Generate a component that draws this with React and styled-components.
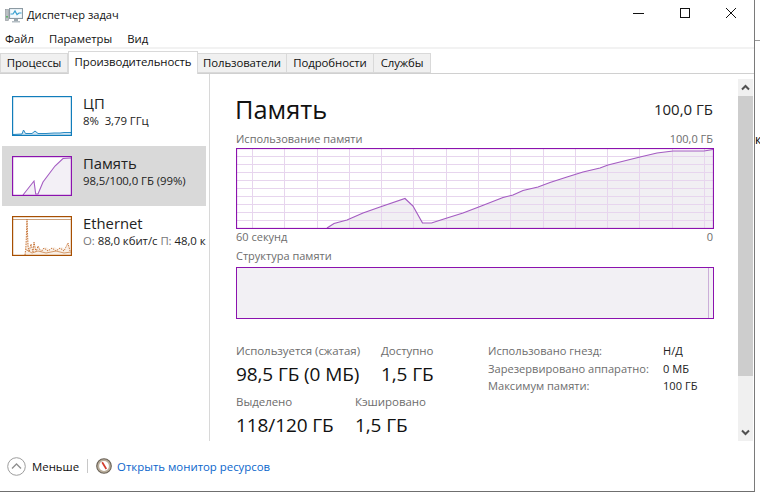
import React from "react";
import styled, { createGlobalStyle } from "styled-components";

const Global = createGlobalStyle`
  html, body { margin: 0; padding: 0; background: #fff; }
  body { width: 760px; height: 494px; overflow: hidden; font-family: "Open Sans", "Noto Sans", sans-serif; }
  * { box-sizing: border-box; }
`;

const Desktop = styled.div`display: flex; width: 760px; height: 494px; background: #fff;`;
const Win = styled.div`
  width: 755px; height: 492px; flex: none; display: flex; flex-direction: column;
  border-right: 1px solid #7a7a7a; border-bottom: 1px solid #6f6f6f; background: #fff;
`;
const Sliver = styled.div`
  flex: 1; display: flex; flex-direction: column; padding-top: 40px;
  font: 12px "Open Sans", sans-serif; color: #000; overflow: hidden;
`;
const Tick = styled.div`height: 1px; background: #9a9a9a;`;
const SliverChar = styled.div`margin-top: 91px; line-height: 16px;`;

const TitleBar = styled.div`height: 29px; display: flex; align-items: center; padding-left: 5px; flex: none;`;
const TitleText = styled.div`margin-left: 4px; font-size: 11.1px; color: #111;`;
const WinButtons = styled.div`margin-left: auto; display: flex; align-self: flex-start;`;
const WinBtn = styled.div`width: 46px; height: 26px; display: flex; align-items: center; justify-content: center;`;

const MenuBar = styled.div`display: flex; height: 20px; flex: none; align-items: center; padding: 0 0 0 5px; gap: 15px; font-size: 11.3px; color: #111; border-bottom: 2px solid #f2f2f2;`;

const TabStrip = styled.div`display: flex; height: 25px; flex: none; align-items: flex-end; border-bottom: 1px solid #d0d0d0; padding-left: 1px;`;
const Tab = styled.div`
  width: ${p => p.$w}px;
  height: ${p => (p.$active ? "23px" : "20px")};
  margin-bottom: ${p => (p.$active ? "-1px" : "0")};
  padding-bottom: ${p => (p.$active ? "3px" : "1px")};
  display: flex; align-items: center; justify-content: center; font-size: 11.4px; color: #111; letter-spacing: -.1px; white-space: nowrap;
  background: ${p => (p.$active ? "#fff" : "#f0f0f0")};
  border: 1px solid #d9d9d9; border-bottom: ${p => (p.$active ? "none" : "1px solid #d9d9d9")};
  margin-left: ${p => (p.$active ? "0" : "-1px")};
`;

const Body = styled.div`flex: 1; display: flex; min-height: 0;`;
const Sidebar = styled.div`width: 210px; flex: none; padding: 22px 3px 0 2px; border-right: 1px solid #d8d8d8; display: flex; flex-direction: column; overflow: hidden;`;
const SideItem = styled.div`
  height: ${p => (p.$first ? "50px" : "60px")}; width: 204px; flex: none; display: flex;
  padding: ${p => (p.$first ? "0 0 0 10px" : "10px 0 0 10px")};
  background: ${p => (p.$active ? "#d9d9d9" : "transparent")};
  white-space: nowrap;
`;
const Thumb = styled.svg`width: 60px; height: 40px; flex: none; display: block; background: #fff;`;
const SideText = styled.div`margin-left: 11px; display: flex; flex-direction: column; margin-top: -3px;`;
const SideName = styled.div`font-size: 14.8px; line-height: 20px; color: #222;`;
const SideSub = styled.div`font-size: 11.4px; line-height: 16px; color: #222; letter-spacing: -.05px;`;
const Dim = styled.span`color: #777;`;

const Main = styled.div`width: 528px; flex: none; padding: 17px 25px 0 26px; display: flex; flex-direction: column;`;
const HeadRow = styled.div`display: flex; justify-content: space-between; align-items: center; height: 36px; margin-bottom: 4px;`;
const HeadTitle = styled.div`font-size: 25.4px; color: #111; margin-left: -1px;`;
const HeadValue = styled.div`font-size: 15px; color: #222;`;
const CapRow = styled.div`display: flex; justify-content: space-between; font-size: 11px; line-height: 15px; color: #6d6d6d; height: ${p => p.$h}; white-space: nowrap;`;
const ChartSvg = styled.svg`display: block; width: 478px; height: 81px; flex: none;`;
const Comp = styled.div`
  width: 478px; height: 52px; flex: none; margin-top: 3px; border: 1px solid #8b12ae; background: #f2f0f4;
  display: flex; justify-content: flex-end; padding-right: 4px;
`;
const CompLine = styled.div`width: 1px; background: #cbaed8;`;

const Stats = styled.div`display: flex; margin-top: 24px;`;
const LeftStats = styled.div`width: 252px; flex: none; display: flex; flex-direction: column; gap: 5px;`;
const StatRow = styled.div`display: flex;`;
const Stat = styled.div`width: ${p => p.$w}px; flex: none; white-space: nowrap;`;
const StatLabel = styled.div`font-size: 11.5px; line-height: 16px; color: #6d6d6d; letter-spacing: -.05px;`;
const StatValue = styled.div`font-size: 19px; line-height: 30px; color: #111; letter-spacing: -.1px;`;
const RightStats = styled.div`display: grid; grid-template-columns: 175px auto; grid-auto-rows: 17.5px; align-content: start; margin-top: -1px; font-size: 11.1px; white-space: nowrap; line-height: 17.5px;`;
const RLabel = styled.div`color: #6d6d6d;`;
const RValue = styled.div`color: #222;`;

const Scrollbar = styled.div`width: 15px; flex: none; margin: 5px 1px 0 0; background: #f0f0f0; display: flex; flex-direction: column;`;
const ScrollBtn = styled.div`height: 17px; display: flex; align-items: center; justify-content: center; flex: none;`;
const ScrollThumb = styled.div`height: 280px; background: #cdcdcd; flex: none;`;
const ScrollTrack = styled.div`flex: 1;`;

const Footer = styled.div`height: 50px; flex: none; display: flex; align-items: center; padding: 0 0 0 7px; font-size: 11.4px;`;
const FooterLabel = styled.div`margin-left: 6px; color: #111;`;
const Sep = styled.div`width: 1px; height: 14px; background: #c8c8c8; margin: 0 8px;`;
const FooterLink = styled.div`margin-left: 5px; color: #0a66cc;`;

const line = "327,228 334,223.5 347,220 363,213 380,207 405,198.5 413,206 422.5,223 431.5,223 447,218 463,213 480,206.5 503,197.5 513,195 523,190.5 538,187 550,182.5 567,177 583,172 600,168 608,165 640,157 657,153 673,151 704,151 713,149.5";

const MemChart = () => {
  const vs = [252, 284, 317, 349, 381, 413, 446, 478, 510, 543, 575, 607, 639, 672, 704];
  const hs = [156, 164, 172, 180, 188, 196, 204, 212, 220];
  return (
    <ChartSvg viewBox="236 148 478 81">
      <polygon points={`${line} 713,228 327,228`} fill="#f1eff3" />
      {vs.map(x => <line key={x} x1={x + 0.5} x2={x + 0.5} y1="148" y2="229" stroke="#e7d5ee" />)}
      {hs.map(y => <line key={y} x1="236" x2="714" y1={y + 0.5} y2={y + 0.5} stroke="#e7d5ee" />)}
      <polyline points={line} fill="none" stroke="#a45cc2" strokeWidth="1.2" />
      <rect x="236.5" y="148.5" width="477" height="80" fill="none" stroke="#8b12ae" strokeWidth="1.2" />
    </ChartSvg>
  );
};

const CpuThumb = () => (
  <Thumb viewBox="0 0 60 40">
    <polygon points="1,39 1,38.5 10,38 11.500,34 13.500,37.500 20,37.500 23,35 26,37.500 34,37.500 42,37 48,37 52,36.500 59,36.500 59,39" fill="#cfe4f2" />
    <polyline points="1,38.500 10,38 11.500,34 13.500,37.500 20,37.500 23,35 26,37.500 34,37.500 42,37 48,37 52,36.500 59,36.500" fill="none" stroke="#2a8bc4" strokeWidth="1" />
    <rect x=".6" y=".6" width="58.800" height="38.800" fill="none" stroke="#117dbb" strokeWidth="1.2" />
  </Thumb>
);
const MemThumb = () => {
  const pts = "11,39 22,25 23.700,38 26,38 31,26 43,10 51,2.500 59,2";
  return (
    <Thumb viewBox="0 0 60 40">
      <polygon points={`${pts} 59,39`} fill="#f3f0f6" />
      <polyline points={pts} fill="none" stroke="#a45cc2" strokeWidth="1.1" />
      <rect x=".6" y=".6" width="58.800" height="38.800" fill="none" stroke="#8b12ae" strokeWidth="1.2" />
    </Thumb>
  );
};
const EthThumb = () => (
  <Thumb viewBox="0 0 60 40">
    <line x1="1" x2="59" y1="3.500" y2="3.500" stroke="#c9a27f" />
    <polygon points="13,39 15,3 17,34 19,30 20,34 22,26 24,34 26,30 28,33 30,33 34,31 38,34 42,31 46,33 50,31 54,34 56,26 58,34 59,39" fill="#f9efe6" />
    <polyline points="13,39 14,30 15,3 16,30 17,36 19,28 21,36 22,26 24,36 26,30 29,36 32,32 36,35 40,32 44,35 48,32 52,35 56,27 58,35" fill="none" stroke="#c8763a" strokeWidth="1" strokeDasharray="1.500 1" />
    <polyline points="13,33 20,37 26,35 34,37 44,35 52,37 59,36" fill="none" stroke="#d49a6a" strokeWidth="1" />
    <rect x=".6" y=".6" width="58.800" height="38.800" fill="none" stroke="#a74f01" strokeWidth="1.2" />
  </Thumb>
);

const AppIcon = () => (
  <svg width="18" height="16" viewBox="0 0 18 16">
    <rect x=".5" y="2.500" width="3" height="11" fill="#b9c0c4" stroke="#8c9296" strokeWidth=".6" />
    <rect x="1.200" y="9" width="1.600" height="1.600" fill="#4fae5a" />
    <rect x="4.500" y="1.500" width="13" height="10" fill="#dfe9ef" stroke="#8c9aa3" />
    <rect x="5.500" y="2.500" width="11" height="8" fill="#f4fafd" />
    <polyline points="5.500,7 8,7 10,4 12,7.500 14,6 16.500,6" fill="none" stroke="#3aa0d0" strokeWidth="1.200" />
    <rect x="9" y="12" width="4" height="2" fill="#9aa6ad" />
    <rect x="7" y="14" width="8" height="1.500" fill="#b4bdc3" />
  </svg>
);
const ResIcon = () => (
  <svg width="16" height="16" viewBox="0 0 16 16">
    <circle cx="8" cy="8" r="7.300" fill="#b9ad9a" stroke="#6a6258" strokeWidth="1.100" />
    <circle cx="8" cy="8" r="4.900" fill="#fff" />
    <line x1="6.200" y1="4.300" x2="10.300" y2="11" stroke="#d23a2a" strokeWidth="1.700" />
  </svg>
);
const Collapse = () => (
  <svg width="19" height="19" viewBox="0 0 19 19">
    <circle cx="9.500" cy="9.500" r="8.800" fill="#fff" stroke="#9d9d9d" strokeWidth="1" />
    <polyline points="5,11.500 9.500,7 14,11.500" fill="none" stroke="#8f8f8f" strokeWidth="1.300" />
  </svg>
);
const Chevron = ({ up }) => (
  <svg width="9" height="7" viewBox="0 0 9 7">
    <polyline points={up ? "1,5.500 4.500,2 8,5.500" : "1,1.500 4.500,5 8,1.500"} fill="none" stroke="#505050" strokeWidth="2" />
  </svg>
);

export default function App() {
  return (
    <Desktop>
      <Global />
      <Win>
        <TitleBar>
          <AppIcon />
          <TitleText>Диспетчер задач</TitleText>
          <WinButtons>
            <WinBtn>
              <svg width="12" height="12" viewBox="0 0 12 12"><line x1="0" x2="11" y1="6.500" y2="6.500" stroke="#111" /></svg>
            </WinBtn>
            <WinBtn>
              <svg width="12" height="12" viewBox="0 0 12 12"><rect x="1.500" y="1.500" width="9" height="9" fill="none" stroke="#111" /></svg>
            </WinBtn>
            <WinBtn>
              <svg width="12" height="12" viewBox="0 0 12 12"><path d="M1 1 L11 11 M11 1 L1 11" stroke="#111" fill="none" /></svg>
            </WinBtn>
          </WinButtons>
        </TitleBar>
        <MenuBar>
          <span>Файл</span><span>Параметры</span><span>Вид</span>
        </MenuBar>
        <TabStrip>
          <Tab $w={68}>Процессы</Tab>
          <Tab $active $w={130}>Производительность</Tab>
          <Tab $w={90}>Пользователи</Tab>
          <Tab $w={88}>Подробности</Tab>
          <Tab $w={58}>Службы</Tab>
        </TabStrip>
        <Body>
          <Sidebar>
            <SideItem $first>
              <CpuThumb />
              <SideText><SideName>ЦП</SideName><SideSub>8%&nbsp; 3,79 ГГц</SideSub></SideText>
            </SideItem>
            <SideItem $active>
              <MemThumb />
              <SideText><SideName>Память</SideName><SideSub>98,5/100,0 ГБ (99%)</SideSub></SideText>
            </SideItem>
            <SideItem>
              <EthThumb />
              <SideText><SideName>Ethernet</SideName><SideSub><Dim>О:</Dim> 88,0 кбит/с <Dim>П:</Dim> 48,0 к</SideSub></SideText>
            </SideItem>
          </Sidebar>
          <Main>
            <HeadRow>
              <HeadTitle>Память</HeadTitle>
              <HeadValue>100,0 ГБ</HeadValue>
            </HeadRow>
            <CapRow $h="17px"><span>Использование памяти</span><span>100,0 ГБ</span></CapRow>
            <MemChart />
            <CapRow $h="19px"><span>60 секунд</span><span>0</span></CapRow>
            <CapRow $h="16px"><span>Структура памяти</span></CapRow>
            <Comp><CompLine /></Comp>
            <Stats>
              <LeftStats>
                <StatRow>
                  <Stat $w={145}><StatLabel>Используется (сжатая)</StatLabel><StatValue>98,5 ГБ (0 МБ)</StatValue></Stat>
                  <Stat $w={100}><StatLabel>Доступно</StatLabel><StatValue>1,5 ГБ</StatValue></Stat>
                </StatRow>
                <StatRow>
                  <Stat $w={119}><StatLabel>Выделено</StatLabel><StatValue>118/120 ГБ</StatValue></Stat>
                  <Stat $w={100}><StatLabel>Кэшировано</StatLabel><StatValue>1,5 ГБ</StatValue></Stat>
                </StatRow>
              </LeftStats>
              <RightStats>
                <RLabel>Использовано гнезд:</RLabel><RValue>Н/Д</RValue>
                <RLabel>Зарезервировано аппаратно:</RLabel><RValue>0 МБ</RValue>
                <RLabel>Максимум памяти:</RLabel><RValue>100 ГБ</RValue>
              </RightStats>
            </Stats>
          </Main>
          <Scrollbar>
            <ScrollBtn><Chevron up /></ScrollBtn>
            <ScrollThumb />
            <ScrollTrack />
            <ScrollBtn><Chevron /></ScrollBtn>
          </Scrollbar>
        </Body>
        <Footer>
          <Collapse />
          <FooterLabel>Меньше</FooterLabel>
          <Sep />
          <ResIcon />
          <FooterLink>Открыть монитор ресурсов</FooterLink>
        </Footer>
      </Win>
      <Sliver>
        <Tick />
        <SliverChar>к</SliverChar>
      </Sliver>
    </Desktop>
  );
}
